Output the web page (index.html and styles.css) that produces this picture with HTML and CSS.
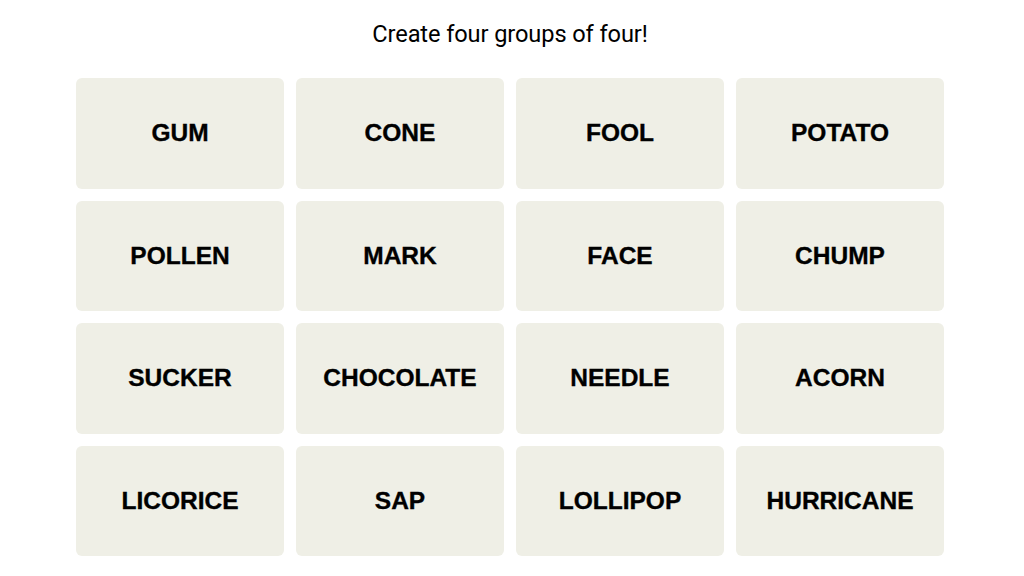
FILE: index.html
```html
<!DOCTYPE html>
<html>
<head>
<meta charset="utf-8">
<link rel="stylesheet" href="styles.css">
</head>
<body>
<main class="page">
  <p class="prompt">Create four groups of four!</p>
  <section class="board">
    <div class="tile">GUM</div>
    <div class="tile">CONE</div>
    <div class="tile">FOOL</div>
    <div class="tile">POTATO</div>
    <div class="tile">POLLEN</div>
    <div class="tile">MARK</div>
    <div class="tile">FACE</div>
    <div class="tile">CHUMP</div>
    <div class="tile">SUCKER</div>
    <div class="tile">CHOCOLATE</div>
    <div class="tile">NEEDLE</div>
    <div class="tile">ACORN</div>
    <div class="tile">LICORICE</div>
    <div class="tile">SAP</div>
    <div class="tile">LOLLIPOP</div>
    <div class="tile">HURRICANE</div>
  </section>
</main>
</body>
</html>
```
FILE: styles.css
```css
html, body {
  margin: 0;
  padding: 0;
  background: #ffffff;
}
.page {
  width: 1020px;
  display: flex;
  flex-direction: column;
  align-items: center;
  font-family: "Roboto", "Liberation Sans", sans-serif;
  color: #000;
}
.prompt {
  margin: 19px 0 0 0;
  height: 30px;
  line-height: 30px;
  font-size: 23.6px;
  font-weight: 400;
  letter-spacing: -0.1px;
}
.board {
  margin-top: 29px;
  display: grid;
  grid-template-columns: repeat(4, 208px);
  grid-auto-rows: 110.5px;
  column-gap: 12px;
  row-gap: 12px;
}
.tile {
  background: #efefe6;
  border-radius: 6px;
  display: flex;
  align-items: center;
  justify-content: center;
  font-family: "Liberation Sans", Arial, sans-serif;
  font-size: 24.5px;
  font-weight: 700;
  -webkit-text-stroke: 0.35px #000;
  text-transform: uppercase;
}
```
